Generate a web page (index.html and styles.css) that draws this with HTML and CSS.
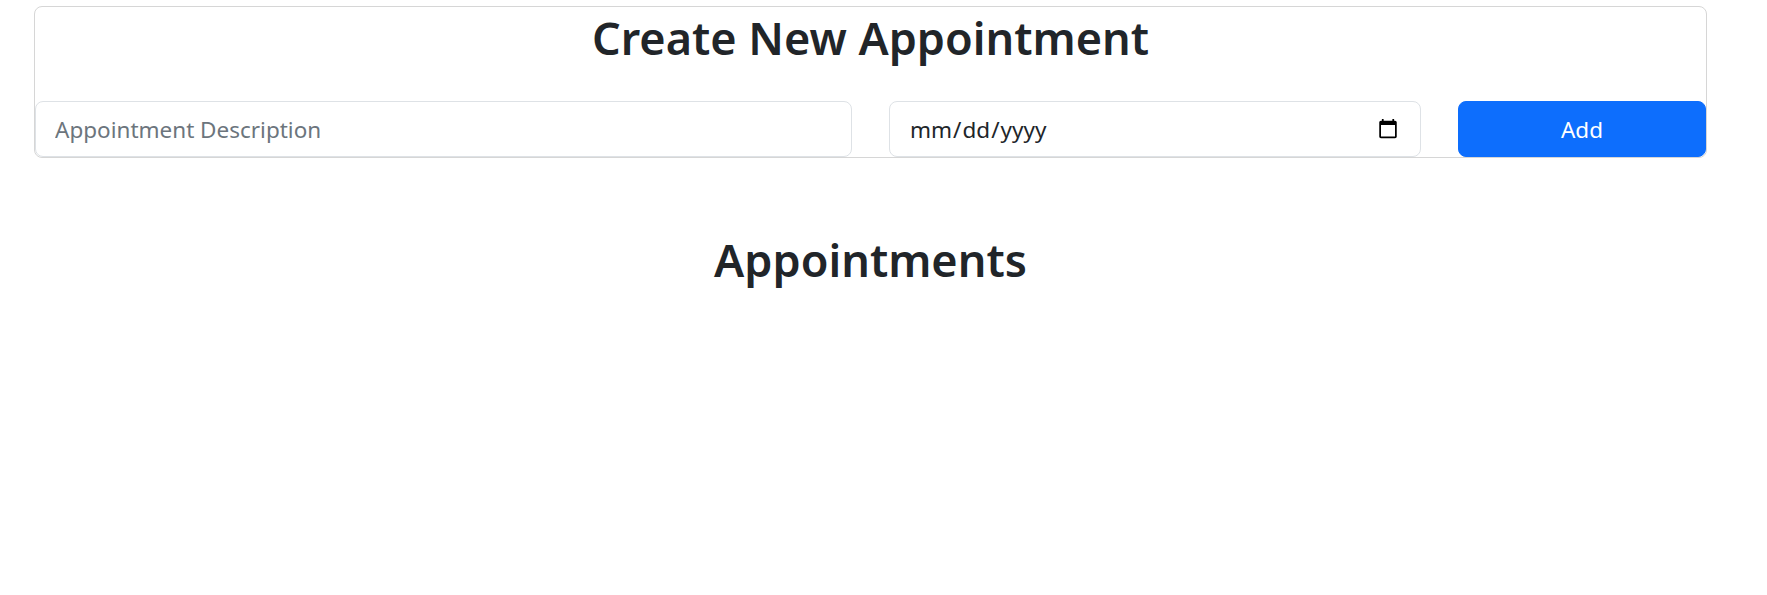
FILE: index.html
```html
<!DOCTYPE html>
<html lang="en">
<head>
<meta charset="utf-8">
<title>Appointments</title>
<link rel="stylesheet" href="styles.css">
</head>
<body>
<main class="page">
  <div class="card">
    <h1 class="title card-title">Create New Appointment</h1>
    <form class="entry">
      <input class="field" type="text" placeholder="Appointment Description">
      <input class="field" type="date">
      <button class="btn-add" type="button">Add</button>
    </form>
  </div>
  <h1 class="title list-title">Appointments</h1>
</main>
</body>
</html>
```
FILE: styles.css
```css
html, body {
  margin: 0;
  padding: 0;
  background: #ffffff;
}
body {
  font-family: "Noto Sans", "Open Sans", sans-serif;
  color: #212529;
}
.page {
  margin: 6px 60px 0 34px;
}
.card {
  border: 1px solid #d6d6d6;
  border-radius: 8px;
}
.title {
  margin: 0;
  font-size: 45px;
  line-height: 56px;
  font-weight: 600;
  text-align: center;
  color: #212529;
}
.card-title {
  margin: 3px 0 35px 0;
}
.entry {
  display: grid;
  grid-template-columns: minmax(0, 817fr) minmax(0, 532fr) minmax(0, 248fr);
  column-gap: 37px;
  margin: 0;
}
.field {
  box-sizing: border-box;
  width: 100%;
  height: 56px;
  border: 1px solid #dee2e6;
  border-radius: 8px;
  padding: 0 19px;
  font-family: inherit;
  font-size: 22.5px;
  color: #212529;
  background: #ffffff;
  outline: none;
}
.field::placeholder {
  color: #6c757d;
}
.btn-add {
  box-sizing: border-box;
  width: 100%;
  height: 56px;
  border: 1px solid #0d6efd;
  border-radius: 8px;
  background: #0d6efd;
  color: #ffffff;
  font-family: inherit;
  font-size: 22.5px;
}
.list-title {
  margin-top: 74px;
}
```
